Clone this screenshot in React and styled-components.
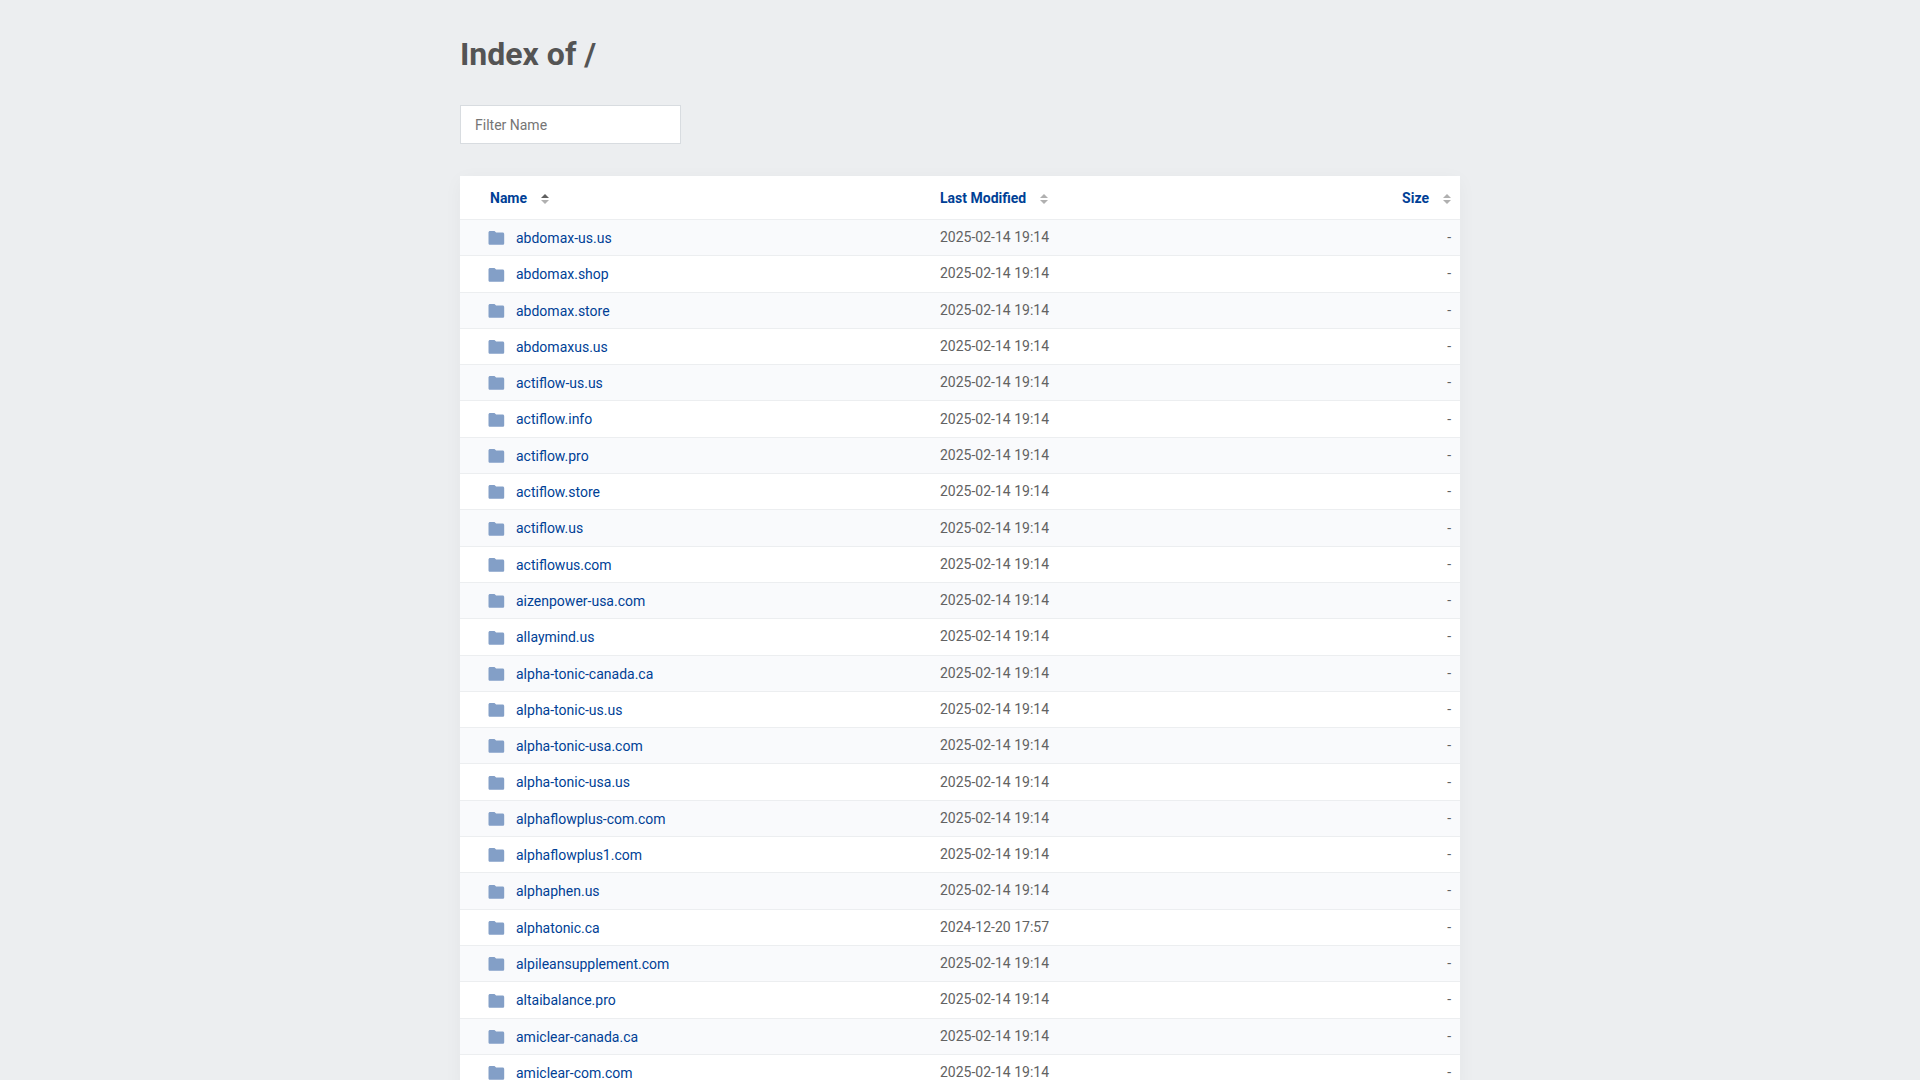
import React, { useState } from 'react';
import styled, { createGlobalStyle } from 'styled-components';

const GlobalStyle = createGlobalStyle`
  body {
    margin: 0;
    background-color: #eceef0;
    color: #545454;
    font-family: Roboto, 'Liberation Sans', sans-serif;
    font-size: 14px;
  }
`;

const S = {
  Container: styled.main`
    max-width: 1000px;
    margin: 0 auto;
    padding: 32px 16px;
  `,
  Title: styled.h1`
    margin: 0 0 29px;
    font-size: 32px;
    line-height: 44px;
  `,
  Filter: styled.input`
    display: block;
    box-sizing: border-box;
    width: 221px;
    height: 39px;
    margin-bottom: 32px;
    padding: 0 14px;
    border: 1px solid #d8dce0;
    background-color: #fff;
    color: #545454;
    font: inherit;

    &::placeholder {
      color: #757575;
    }
  `,
  Table: styled.table`
    width: 100%;
    table-layout: fixed;
    border-collapse: separate;
    border-spacing: 0;
    background-color: #fff;
    box-shadow: 0 4px 18px rgba(0, 0, 0, 0.04);
  `,
  HeadCell: styled.th`
    box-sizing: border-box;
    width: ${({ $width }) => $width};
    height: 44px;
    padding: 0 9px 0 ${({ $indent }) => ($indent ? '30px' : '10px')};
    border-bottom: 1px solid #eceef0;
    text-align: ${({ $align }) => $align || 'left'};
  `,
  SortButton: styled.button`
    display: inline-flex;
    align-items: center;
    gap: 14px;
    padding: 0;
    border: none;
    background: none;
    color: #003f96;
    font: inherit;
    cursor: pointer;
  `,
  SortIcon: styled.svg`
    width: 8px;
    height: 10px;
    margin-top: 3px;
  `,
  Row: styled.tr`
    &:nth-child(odd) {
      background-color: #f9fafc;
    }
  `,
  Cell: styled.td`
    padding: 8px 9px 9px 10px;
    border-bottom: 1px solid #eceef0;
    color: #626262;
    text-align: ${({ $align }) => $align || 'left'};
    white-space: nowrap;
  `,
  Link: styled.a`
    color: #003f96;
    text-decoration: none;

    &:hover {
      text-decoration: underline;
    }
  `,
  FolderIcon: styled.svg`
    width: 17px;
    height: 18px;
    margin-right: 11px;
    vertical-align: middle;
  `,
};

S.NameCell = styled(S.Cell)`
  padding: 10px 9px 7px 28px;
`;

const DEFAULT_DATE = '2025-02-14 19:14';

const FOLDERS = [
  { name: 'abdomax-us.us' },
  { name: 'abdomax.shop' },
  { name: 'abdomax.store' },
  { name: 'abdomaxus.us' },
  { name: 'actiflow-us.us' },
  { name: 'actiflow.info' },
  { name: 'actiflow.pro' },
  { name: 'actiflow.store' },
  { name: 'actiflow.us' },
  { name: 'actiflowus.com' },
  { name: 'aizenpower-usa.com' },
  { name: 'allaymind.us' },
  { name: 'alpha-tonic-canada.ca' },
  { name: 'alpha-tonic-us.us' },
  { name: 'alpha-tonic-usa.com' },
  { name: 'alpha-tonic-usa.us' },
  { name: 'alphaflowplus-com.com' },
  { name: 'alphaflowplus1.com' },
  { name: 'alphaphen.us' },
  { name: 'alphatonic.ca', modified: '2024-12-20 17:57' },
  { name: 'alpileansupplement.com' },
  { name: 'altaibalance.pro' },
  { name: 'amiclear-canada.ca' },
  { name: 'amiclear-com.com' },
];

const COLUMNS = [
  { key: 'name', label: 'Name', width: '47%', indent: true },
  { key: 'modified', label: 'Last Modified', width: '33%' },
  { key: 'size', label: 'Size', width: '20%', align: 'right' },
];

const getValue = (folder, key) => {
  if (key === 'modified') return folder.modified || DEFAULT_DATE;
  return folder[key] || '';
};

const Folder = () => (
  <S.FolderIcon viewBox="0 0 17 18" aria-hidden="true">
    <path
      d="M2.1 1h4.4L8.1 2.6h6.5c.9 0 1.6.7 1.6 1.6v9c0 .9-.7 1.6-1.6 1.6H2.1c-.9 0-1.6-.7-1.6-1.6V2.6c0-.9.7-1.6 1.6-1.6z"
      fill="#839fc7"
    />
  </S.FolderIcon>
);

const SortArrows = ({ direction }) => (
  <S.SortIcon viewBox="0 0 8 10" aria-hidden="true">
    <path d="M0 4l4-4 4 4z" fill={direction === 'asc' ? '#606060' : '#b0b0b0'} />
    <path d="M0 6l4 4 4-4z" fill={direction === 'desc' ? '#606060' : '#b0b0b0'} />
  </S.SortIcon>
);

const App = () => {
  const [filter, setFilter] = useState('');
  const [sort, setSort] = useState({ key: 'name', direction: 'asc' });

  const handleSort = (key) => {
    const flip = sort.key === key && sort.direction === 'asc';
    setSort({ key, direction: flip ? 'desc' : 'asc' });
  };

  const order = sort.direction === 'asc' ? 1 : -1;
  const compare = (a, b) => {
    const left = getValue(a, sort.key);
    const right = getValue(b, sort.key);
    if (left === right) return 0;
    return left < right ? -order : order;
  };
  const folders = FOLDERS.filter(({ name }) =>
    name.includes(filter.toLowerCase())
  ).sort(compare);

  return (
    <>
      <GlobalStyle />
      <S.Container>
        <S.Title>Index of /</S.Title>
        <S.Filter
          type="text"
          aria-label="Filter Name"
          placeholder="Filter Name"
          value={filter}
          onChange={(event) => setFilter(event.target.value)}
        />
        <S.Table>
          <thead>
            <tr>
              {COLUMNS.map(({ key, label, width, align, indent }) => (
                <S.HeadCell
                  key={key}
                  scope="col"
                  $width={width}
                  $align={align}
                  $indent={indent}
                >
                  <S.SortButton type="button" onClick={() => handleSort(key)}>
                    {label}
                    <SortArrows direction={sort.key === key ? sort.direction : null} />
                  </S.SortButton>
                </S.HeadCell>
              ))}
            </tr>
          </thead>
          <tbody>
            {folders.map((folder) => (
              <S.Row key={folder.name}>
                <S.NameCell>
                  <S.Link href={`/${folder.name}/`}>
                    <Folder />
                    {folder.name}
                  </S.Link>
                </S.NameCell>
                <S.Cell>{getValue(folder, 'modified')}</S.Cell>
                <S.Cell $align="right">-</S.Cell>
              </S.Row>
            ))}
          </tbody>
        </S.Table>
      </S.Container>
    </>
  );
};

export default App;
